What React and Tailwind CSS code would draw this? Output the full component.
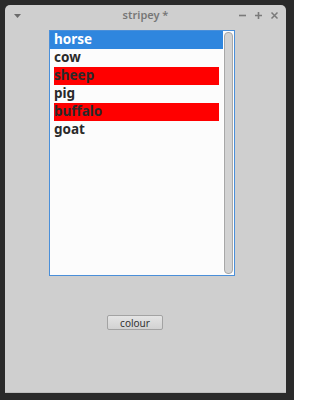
export default function App() {
  const animals = [
    { name: 'horse', kind: 'selected' },
    { name: 'cow', kind: 'plain' },
    { name: 'sheep', kind: 'red' },
    { name: 'pig', kind: 'plain' },
    { name: 'buffalo', kind: 'red' },
    { name: 'goat', kind: 'plain' },
  ];

  return (
    <div className="w-[294px] h-[400px] bg-[#2a2a2a] pt-[5px] pl-[5px] font-['Noto_Sans',sans-serif]">
      <div className="w-[281px] h-[388px] bg-[#cfcfcf] rounded-t-[5px] flex flex-col border-b border-[#bdbdbd]">
        {/* title bar */}
        <div className="h-[20px] flex items-center pl-[8px] pr-[7px] relative">
          <svg width="7" height="4" viewBox="0 0 7 4" className="ml-[1px] mt-[1px]">
            <path d="M0 0 H7 L3.5 4 Z" fill="#6b6b6b" />
          </svg>
          <div className="absolute left-0 right-0 top-[3px] text-center text-[11px] font-semibold text-[#777777] leading-[14px]">
            stripey *
          </div>
          <div className="ml-auto flex items-center gap-[7px]">
            <svg width="9" height="9" viewBox="0 0 9 9">
              <path d="M1 4.5 H8" stroke="#7a7a7a" strokeWidth="1.6" />
            </svg>
            <svg width="9" height="9" viewBox="0 0 9 9">
              <path d="M1 4.5 H8 M4.5 1 V8" stroke="#7a7a7a" strokeWidth="1.6" />
            </svg>
            <svg width="9" height="9" viewBox="0 0 9 9">
              <path d="M1.5 1.5 L7.5 7.5 M7.5 1.5 L1.5 7.5" stroke="#7a7a7a" strokeWidth="1.5" />
            </svg>
          </div>
        </div>

        {/* list box */}
        <div className="ml-[44px] mt-[5px] w-[186px] h-[246px] bg-[#fcfcfc] border border-[#4a8fd9] flex">
          <div className="flex-1 flex flex-col">
            {animals.map((a) => (
              <div
                key={a.name}
                className={
                  a.kind === 'selected'
                    ? 'h-[18px] bg-[#2f86de] text-white pl-[4px] flex items-center text-[13.5px] font-bold leading-none'
                    : 'h-[18px] pl-[4px] pr-[4px] flex items-center'
                }
              >
                {a.kind === 'selected' ? (
                  a.name
                ) : (
                  <div
                    className={
                      a.kind === 'red'
                        ? 'w-full h-[18px] bg-[#ff0000] text-[#2a2a2a] flex items-center text-[13.5px] font-bold leading-none'
                        : 'w-full h-[18px] text-[#2a2a2a] flex items-center text-[13.5px] font-bold leading-none'
                    }
                  >
                    {a.name}
                  </div>
                )}
              </div>
            ))}
          </div>
          <div className="w-[11px] py-[1px] pl-[1px] pr-[1px]">
            <div className="h-full w-[9px] rounded-[4px] bg-[#d3d3d3] border border-[#a8a8a8] shadow-[0_0_0_1px_#ffffff]" />
          </div>
        </div>

        {/* button */}
        <div className="mt-[39px] ml-[102px]">
          <button className="w-[56px] h-[15px] rounded-[2px] border border-[#a3a3a3] bg-gradient-to-b from-[#e4e4e4] to-[#d2d2d2] text-[10px] leading-none text-[#333333] flex items-center justify-center">
            colour
          </button>
        </div>
      </div>
    </div>
  );
}
